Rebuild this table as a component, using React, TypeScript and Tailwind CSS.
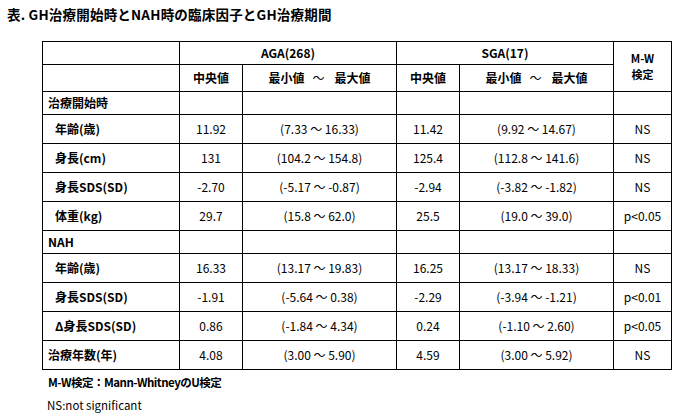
import React from "react";

const font = { fontFamily: '"Noto Sans CJK JP", "Liberation Sans", sans-serif' };

type Row = { label: string; indent?: boolean; section?: boolean; a?: string[]; s?: string[]; mw?: string };

const rows: Row[] = [
  { label: "治療開始時", section: true },
  { label: "年齢(歳)", indent: true, a: ["11.92", "(7.33 ～ 16.33)"], s: ["11.42", "(9.92 ～ 14.67)"], mw: "NS" },
  { label: "身長(cm)", indent: true, a: ["131", "(104.2 ～ 154.8)"], s: ["125.4", "(112.8 ～ 141.6)"], mw: "NS" },
  { label: "身長SDS(SD)", indent: true, a: ["-2.70", "(-5.17 ～ -0.87)"], s: ["-2.94", "(-3.82 ～ -1.82)"], mw: "NS" },
  { label: "体重(kg)", indent: true, a: ["29.7", "(15.8 ～ 62.0)"], s: ["25.5", "(19.0 ～ 39.0)"], mw: "p<0.05" },
  { label: "NAH", section: true },
  { label: "年齢(歳)", indent: true, a: ["16.33", "(13.17 ～ 19.83)"], s: ["16.25", "(13.17 ～ 18.33)"], mw: "NS" },
  { label: "身長SDS(SD)", indent: true, a: ["-1.91", "(-5.64 ～ 0.38)"], s: ["-2.29", "(-3.94 ～ -1.21)"], mw: "p<0.01" },
  { label: "Δ身長SDS(SD)", indent: true, a: ["0.86", "(-1.84 ～ 4.34)"], s: ["0.24", "(-1.10 ～ 2.60)"], mw: "p<0.05" },
  { label: "治療年数(年)", a: ["4.08", "(3.00 ～ 5.90)"], s: ["4.59", "(3.00 ～ 5.92)"], mw: "NS" },
];

function RangeHead() {
  return (
    <span className="inline-flex items-center">
      <span>最小値</span>
      <span className="ml-[8px] mr-[10px] font-normal">～</span>
      <span>最大値</span>
    </span>
  );
}

export default function App() {
  return (
    <div className="w-[694px] h-[419px] bg-white text-black pt-[5px] pl-[7px]" style={font}>
      <div className="text-[13.5px] font-bold leading-[18px] tracking-[0.2px]">表. GH治療開始時とNAH時の臨床因子とGH治療期間</div>
      <table className="ml-[35px] mt-[18px] border-collapse table-fixed text-[12px] leading-[14px]">
        <colgroup>
          <col className="w-[137px]" />
          <col className="w-[63px]" />
          <col className="w-[154px]" />
          <col className="w-[63px]" />
          <col className="w-[154px]" />
          <col className="w-[58px]" />
        </colgroup>
        <tbody>
          <tr className="h-[23px] font-bold">
            <td className="border border-black"></td>
            <td className="border border-black text-center" colSpan={2}>AGA(268)</td>
            <td className="border border-black text-center" colSpan={2}>SGA(17)</td>
            <td className="border border-black text-center text-[11px] leading-[16px] pb-[2px]" rowSpan={2}>
              <div>M-W</div>
              <div>検定</div>
            </td>
          </tr>
          <tr className="h-[27px] font-bold">
            <td className="border border-black"></td>
            <td className="border border-black text-center">中央値</td>
            <td className="border border-black text-center"><RangeHead /></td>
            <td className="border border-black text-center">中央値</td>
            <td className="border border-black text-center"><RangeHead /></td>
          </tr>
          {rows.map((r, i) => (
            <tr key={i} className={r.section ? "h-[23px]" : "h-[29px]"}>
              <td className={"border border-black font-bold " + (r.indent ? "pl-[12px]" : "pl-[5px]")}>{r.label}</td>
              <td className="border border-black text-center">{r.a ? r.a[0] : ""}</td>
              <td className="border border-black text-center whitespace-pre">{r.a ? r.a[1] : ""}</td>
              <td className="border border-black text-center">{r.s ? r.s[0] : ""}</td>
              <td className="border border-black text-center whitespace-pre">{r.s ? r.s[1] : ""}</td>
              <td className="border border-black text-center">{r.mw ?? ""}</td>
            </tr>
          ))}
        </tbody>
      </table>
      <div className="ml-[41px] mt-[4px] text-[11.5px] font-bold leading-[16px] tracking-[-0.5px]">M-W検定：Mann-WhitneyのU検定</div>
      <div className="ml-[40px] mt-[7px] text-[11.5px] leading-[16px]">NS:not significant</div>
    </div>
  );
}
